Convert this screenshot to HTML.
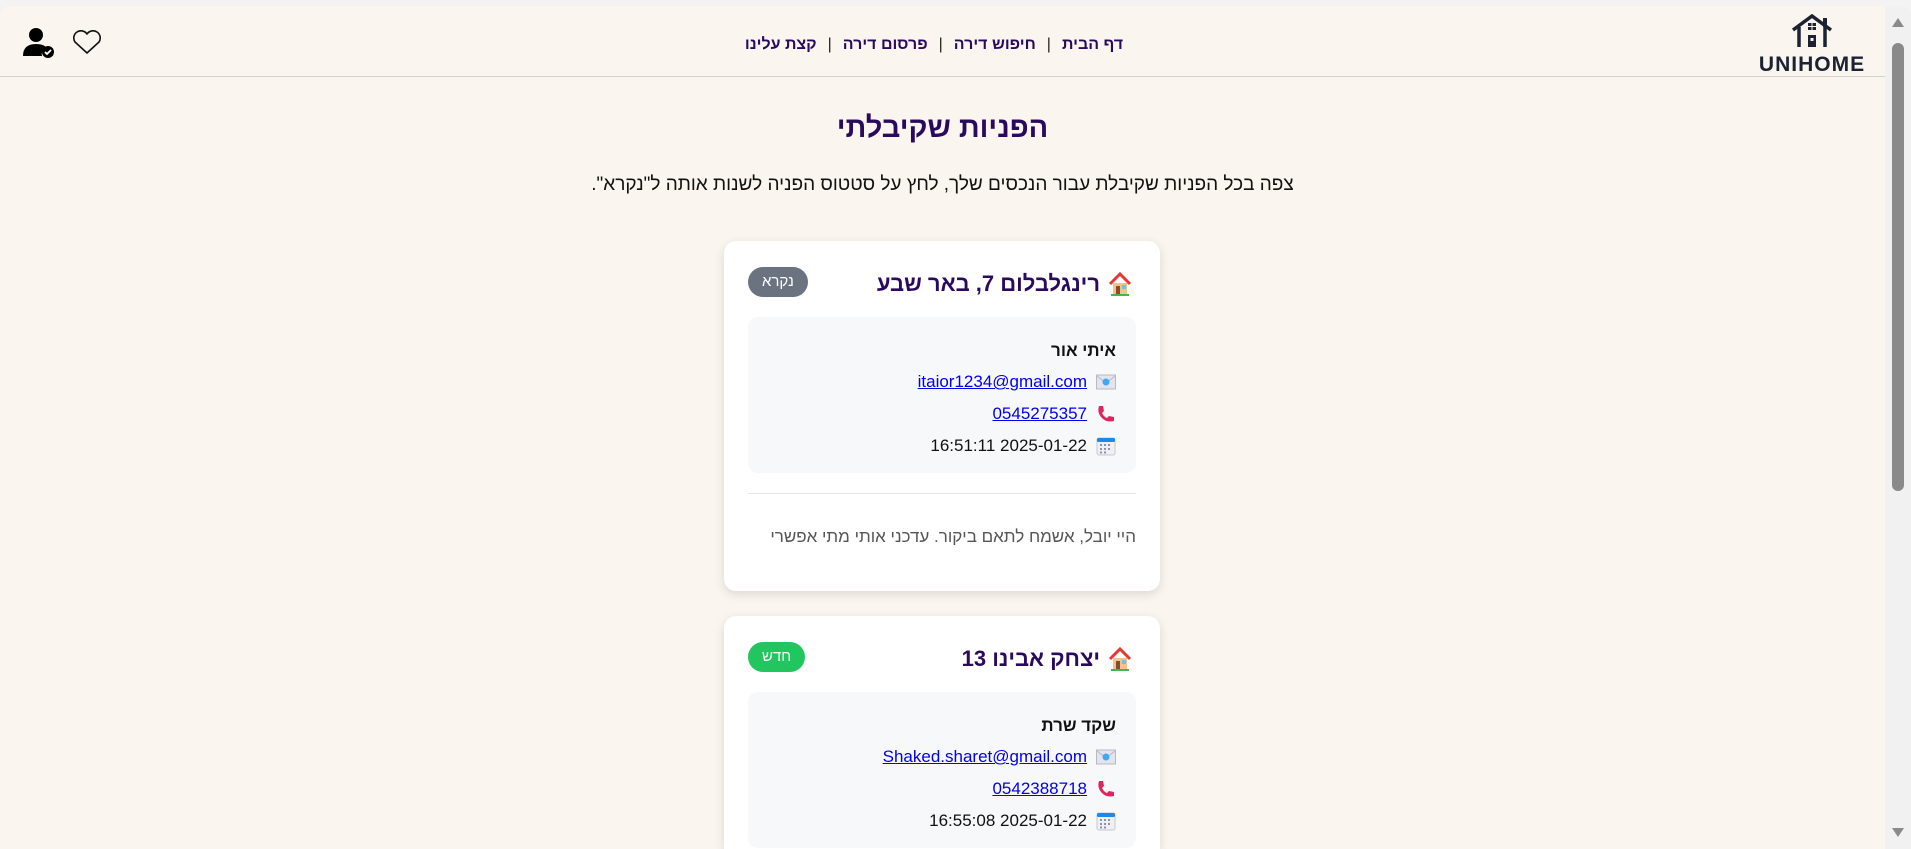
<!DOCTYPE html>
<html><head><meta charset="utf-8">
<style>
*{box-sizing:border-box;margin:0;padding:0}
html,body{width:1911px;height:849px;overflow:hidden;background:#f3f3f3;font-family:"Liberation Sans","Noto Sans CJK JP",sans-serif}
#win{position:absolute;left:0;top:6px;width:1911px;height:843px;background:#faf5ee;border-radius:10px 10px 0 0;overflow:hidden}
#sb{position:absolute;right:0;top:0;width:26px;height:843px;background:#f1f1f1}
#sb .thumb{position:absolute;left:7px;top:37px;width:12px;height:448px;background:#8a8a8a;border-radius:6px}
#sb .up{position:absolute;left:7px;top:12px;width:0;height:0;border-left:6px solid transparent;border-right:6px solid transparent;border-bottom:9px solid #8a8a8a}
#sb .dn{position:absolute;left:7px;bottom:12px;width:0;height:0;border-left:6px solid transparent;border-right:6px solid transparent;border-top:9px solid #8a8a8a}
#hdr{position:absolute;left:0;top:0;width:1885px;height:71px;border-bottom:1px solid #d5d2cc}
#nav{position:absolute;left:735px;width:398px;top:30px;direction:rtl;font-size:16px;font-weight:bold;color:#2a0a5e;white-space:nowrap;text-align:center}
#nav span.sep{color:#222;font-weight:normal;margin:0 11px}
#logo{position:absolute;left:1758px;top:8px;width:108px;text-align:center}
#logo .t{font-size:21px;font-weight:bold;color:#1a2233;letter-spacing:1px;margin-top:0px}
h1{position:absolute;left:0;width:1885px;top:106px;text-align:center;font-size:29px;color:#2a0a5e;font-weight:bold;direction:rtl}
.sub{position:absolute;left:0;width:1885px;top:168px;text-align:center;font-size:19px;color:#111;direction:rtl}
.card{position:absolute;left:724px;width:436px;background:#fff;border-radius:12px;box-shadow:0 3px 10px rgba(0,0,0,.12);direction:rtl}
.ct{position:absolute;right:28px;top:30px;font-size:22px;font-weight:bold;color:#2a0a5e;display:flex;align-items:center;gap:8px}
.badge{position:absolute;left:24px;top:26px;height:30px;border-radius:15px;color:#fff;font-size:15px;line-height:30px;text-align:center;padding:0 14px}
.box{position:absolute;left:24px;right:24px;top:76px;height:156px;background:#f7f8fa;border-radius:10px;padding:18px 20px 0 0;font-size:17px;color:#111}
.box .n{font-weight:bold;height:31px;line-height:31px}
.row{height:32px;line-height:32px;display:flex;align-items:center;gap:9px}
.row a{color:#0000ee;text-decoration:underline}
.hr{position:absolute;left:24px;right:24px;top:252px;border-top:1px solid #e6e6e6}
.msg{position:absolute;right:24px;top:286px;font-size:17px;color:#555}
</style></head><body>
<div id="win">
<div id="hdr">
  <svg style="position:absolute;left:23px;top:21px" width="32" height="31" viewBox="0 0 32 31"><circle cx="13" cy="8" r="7" fill="#000"/><path d="M0 29 Q0 17 13 17 Q20 17 23 20 A8 8 0 0 0 19 29 Z" fill="#000"/><circle cx="25" cy="25" r="6" fill="#000"/><path d="M22 25 l2 2 l4 -4" stroke="#fff" stroke-width="1.8" fill="none"/></svg>
  <svg style="position:absolute;left:72px;top:24px" width="30" height="25" viewBox="0 0 30 25"><path d="M15 23 L3 12 A6.5 6.5 0 0 1 15 4 A6.5 6.5 0 0 1 27 12 Z" stroke="#111" stroke-width="1.6" fill="none" stroke-linejoin="round"/></svg>
  <div id="nav">דף הבית<span class="sep">|</span>חיפוש דירה<span class="sep">|</span>פרסום דירה<span class="sep">|</span>קצת עלינו</div>
  <div id="logo">
    <svg width="44" height="34" viewBox="0 0 44 34"><path d="M3 16 L22 2 L41 16" stroke="#1a2233" stroke-width="3.5" fill="none"/><path d="M9 13 V33 M35 13 V33" stroke="#1a2233" stroke-width="3.5"/><rect x="33" y="4" width="4" height="9" fill="#1a2233"/><rect x="18" y="9" width="8" height="7" fill="#1a2233"/><path d="M22 9v7M18 12.5h8" stroke="#faf5ee" stroke-width="1"/><rect x="18" y="21" width="8" height="12" fill="#1a2233"/><rect x="20.5" y="24" width="3" height="3" fill="#faf5ee"/></svg>
    <div class="t">UNIHOME</div>
  </div>
</div>
<h1>הפניות שקיבלתי</h1>
<div class="sub">צפה בכל הפניות שקיבלת עבור הנכסים שלך, לחץ על סטטוס הפניה לשנות אותה ל"נקרא".</div>

<div class="card" style="top:235px;height:350px">
  <div class="ct"><svg width="24" height="24" viewBox="0 0 24 24"><path d="M2 12 L12 2 L22 12" stroke="#e53935" stroke-width="3" fill="none"/><rect x="5" y="11" width="14" height="11" fill="#f2c28c"/><rect x="8" y="14" width="4" height="8" fill="#8b4b2a"/><rect x="14" y="13" width="4" height="4" fill="#6ec0f0"/><rect x="3" y="22" width="18" height="2" fill="#4caf50"/></svg>רינגלבלום 7, באר שבע</div>
  <div class="badge" style="background:#6b7280">נקרא</div>
  <div class="box">
    <div class="n">איתי אור</div>
    <div class="row"><svg width="20" height="16" viewBox="0 0 20 16"><rect x="0.5" y="1" width="19" height="14" fill="#e4e4ee" stroke="#b9b9c6"/><path d="M1 2 L10 9 L19 2" stroke="#b9b9c6" fill="none"/><circle cx="10" cy="8" r="3.5" fill="#3fa9f5"/></svg><a>itaior1234@gmail.com</a></div>
    <div class="row"><svg width="20" height="20" viewBox="0 0 20 20"><path d="M3 2 L7 2 L8 7 L6 9 Q8 13 11 14 L13 12 L18 13 L18 17 Q10 19 5 13 Q1 8 3 2Z" fill="#e0245e"/></svg><a>0545275357</a></div>
    <div class="row"><svg width="20" height="20" viewBox="0 0 20 20"><rect x="1" y="2" width="18" height="17" rx="2" fill="#eef0f5" stroke="#c5c8d2"/><rect x="1" y="2" width="18" height="4" rx="1.5" fill="#1e88e5"/><g fill="#8c93a3"><rect x="4" y="8" width="2" height="2"/><rect x="8" y="8" width="2" height="2"/><rect x="12" y="8" width="2" height="2"/><rect x="4" y="12" width="2" height="2"/><rect x="8" y="12" width="2" height="2"/><rect x="12" y="12" width="2" height="2"/><rect x="4" y="15.5" width="2" height="2"/><rect x="8" y="15.5" width="2" height="2"/></g></svg><span>2025-01-22 16:51:11</span></div>
  </div>
  <div class="hr"></div>
  <div class="msg">היי יובל, אשמח לתאם ביקור. עדכני אותי מתי אפשרי</div>
</div>

<div class="card" style="top:610px;height:233px;border-radius:12px 12px 0 0">
  <div class="ct"><svg width="24" height="24" viewBox="0 0 24 24"><path d="M2 12 L12 2 L22 12" stroke="#e53935" stroke-width="3" fill="none"/><rect x="5" y="11" width="14" height="11" fill="#f2c28c"/><rect x="8" y="14" width="4" height="8" fill="#8b4b2a"/><rect x="14" y="13" width="4" height="4" fill="#6ec0f0"/><rect x="3" y="22" width="18" height="2" fill="#4caf50"/></svg>יצחק אבינו 13</div>
  <div class="badge" style="background:#22c55e">חדש</div>
  <div class="box">
    <div class="n">שקד שרת</div>
    <div class="row"><svg width="20" height="16" viewBox="0 0 20 16"><rect x="0.5" y="1" width="19" height="14" fill="#e4e4ee" stroke="#b9b9c6"/><path d="M1 2 L10 9 L19 2" stroke="#b9b9c6" fill="none"/><circle cx="10" cy="8" r="3.5" fill="#3fa9f5"/></svg><a>Shaked.sharet@gmail.com</a></div>
    <div class="row"><svg width="20" height="20" viewBox="0 0 20 20"><path d="M3 2 L7 2 L8 7 L6 9 Q8 13 11 14 L13 12 L18 13 L18 17 Q10 19 5 13 Q1 8 3 2Z" fill="#e0245e"/></svg><a>0542388718</a></div>
    <div class="row"><svg width="20" height="20" viewBox="0 0 20 20"><rect x="1" y="2" width="18" height="17" rx="2" fill="#eef0f5" stroke="#c5c8d2"/><rect x="1" y="2" width="18" height="4" rx="1.5" fill="#1e88e5"/><g fill="#8c93a3"><rect x="4" y="8" width="2" height="2"/><rect x="8" y="8" width="2" height="2"/><rect x="12" y="8" width="2" height="2"/><rect x="4" y="12" width="2" height="2"/><rect x="8" y="12" width="2" height="2"/><rect x="12" y="12" width="2" height="2"/><rect x="4" y="15.5" width="2" height="2"/><rect x="8" y="15.5" width="2" height="2"/></g></svg><span>2025-01-22 16:55:08</span></div>
  </div>
</div>

<div id="sb"><div class="up"></div><div class="thumb"></div><div class="dn"></div></div>
</div>
</body></html>
